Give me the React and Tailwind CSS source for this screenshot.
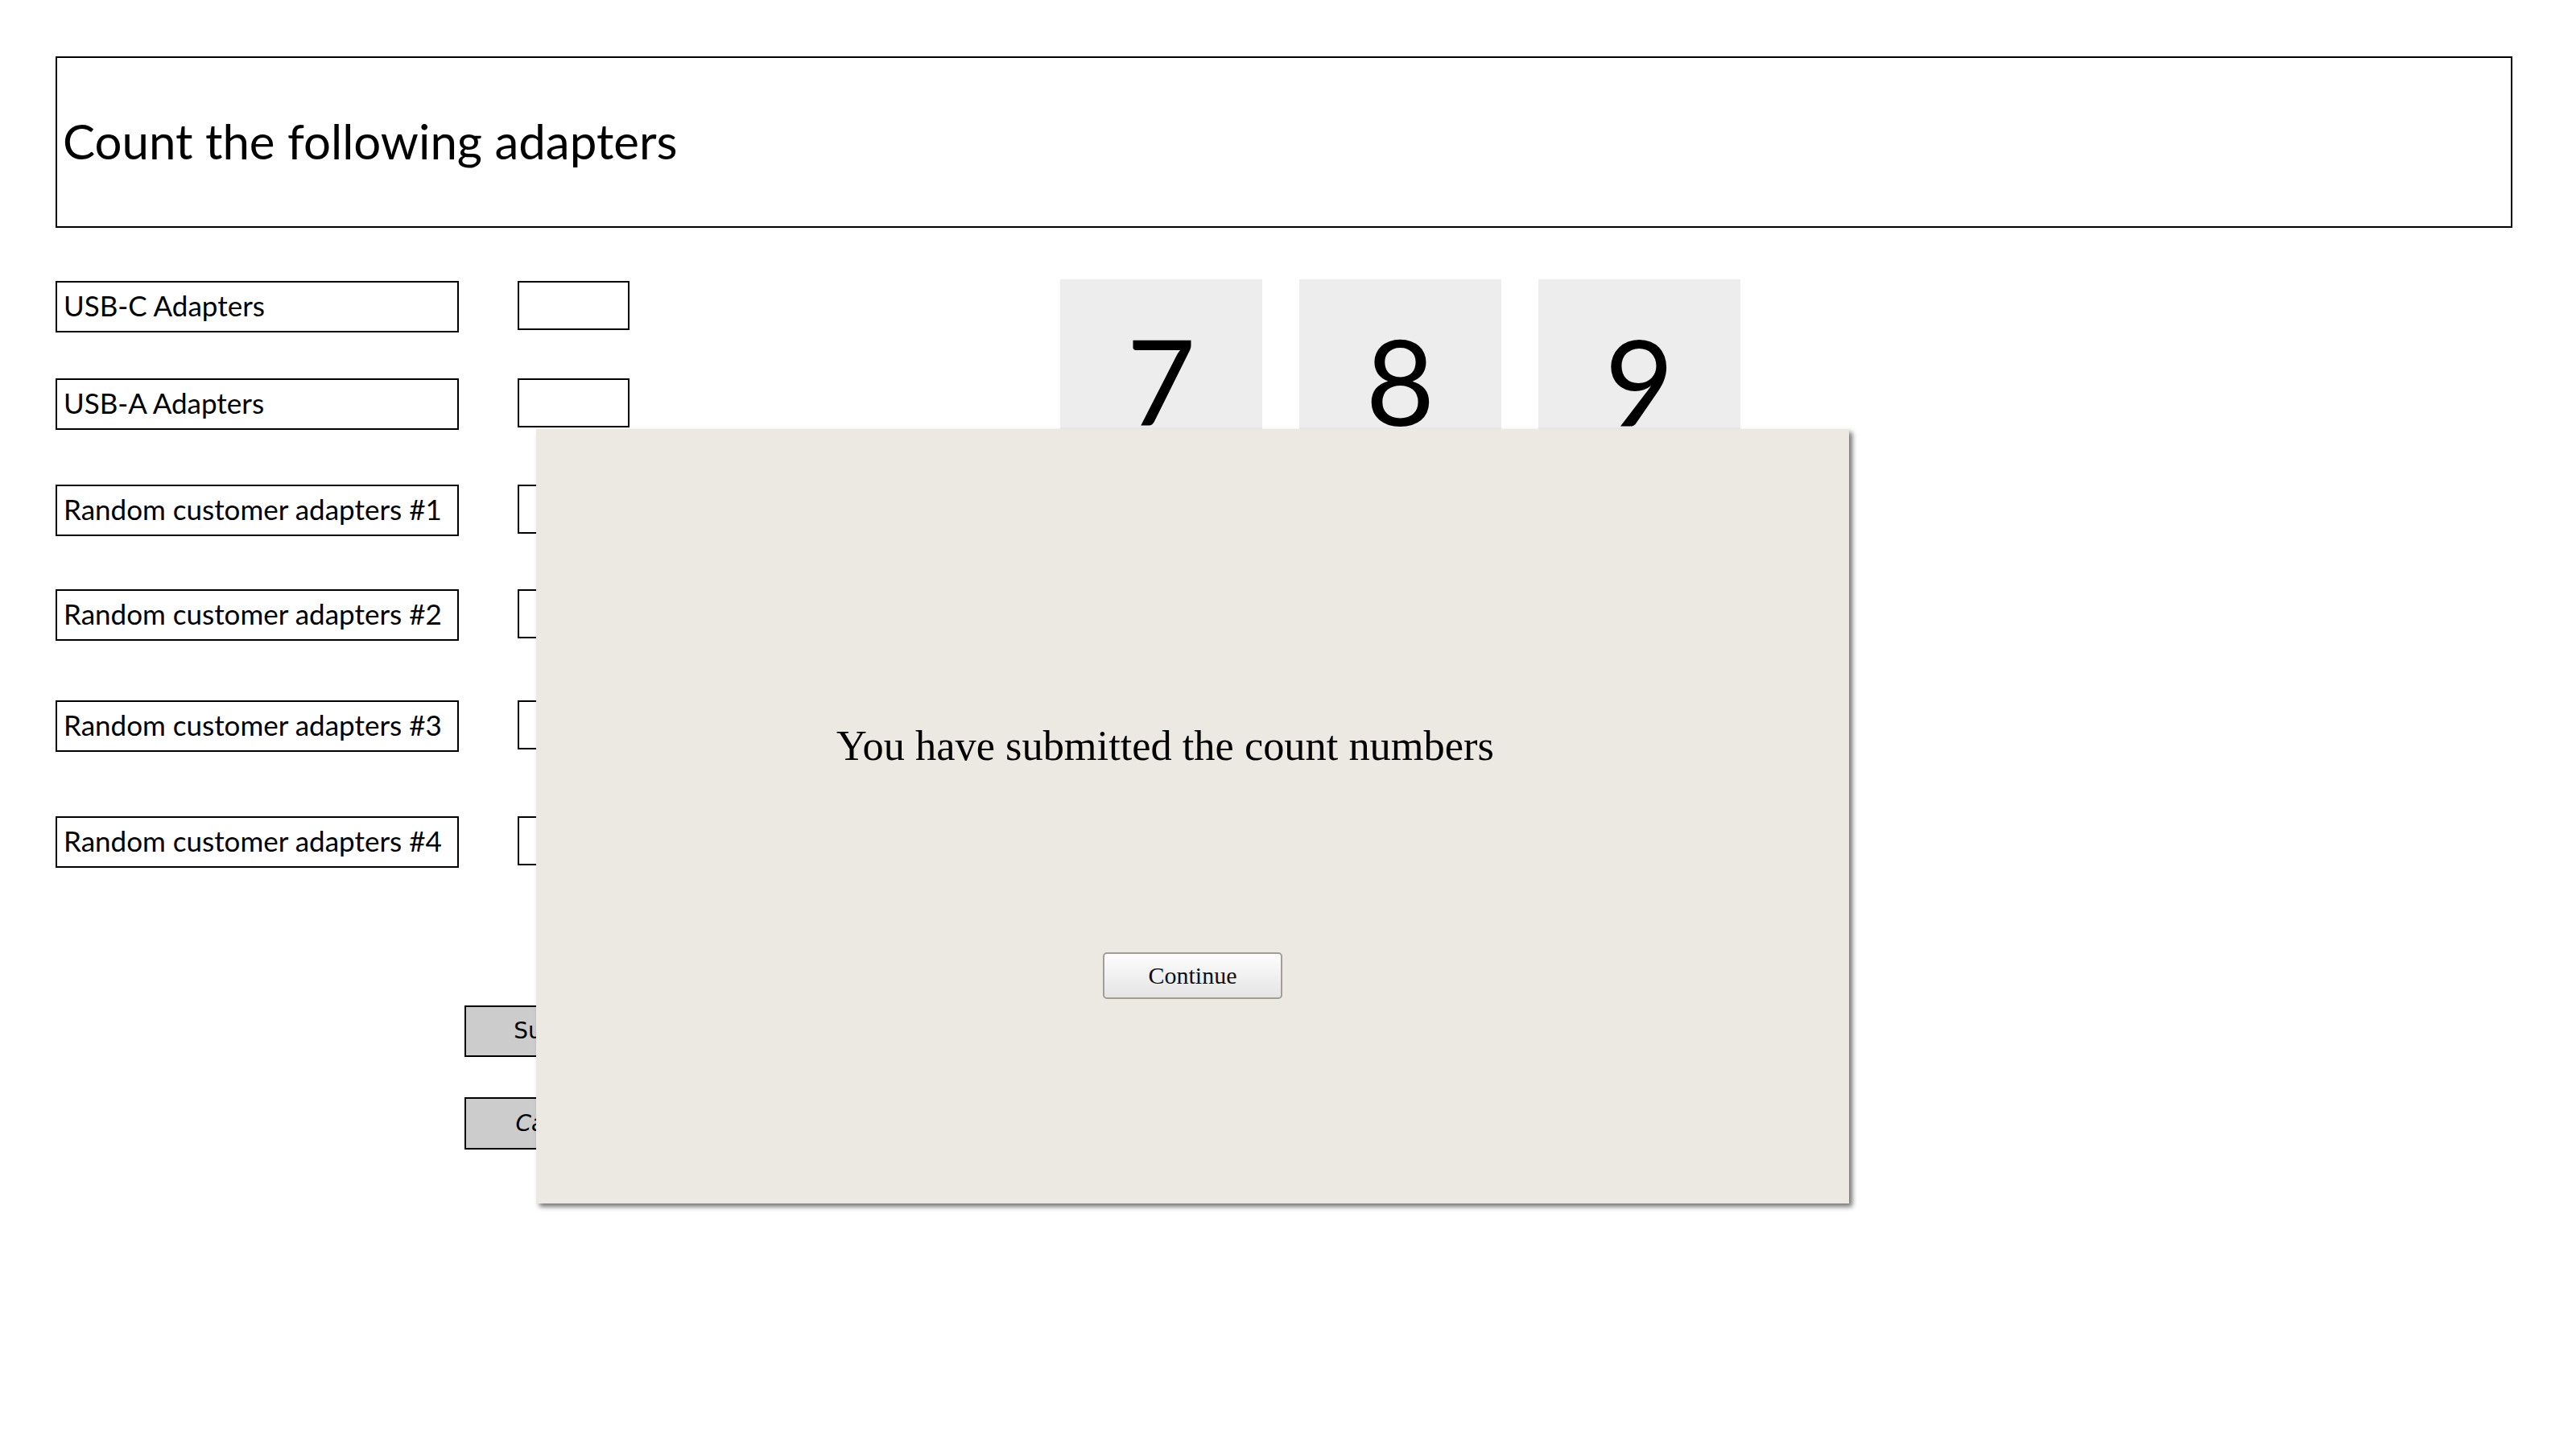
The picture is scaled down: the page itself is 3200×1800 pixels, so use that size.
import React from 'react';

const rows = [
  { label: 'USB-C Adapters', mt: 'mt-0' },
  { label: 'USB-A Adapters', mt: 'mt-[57px]' },
  { label: 'Random customer adapters #1', mt: 'mt-[68px]' },
  { label: 'Random customer adapters #2', mt: 'mt-[66px]' },
  { label: 'Random customer adapters #3', mt: 'mt-[74px]' },
  { label: 'Random customer adapters #4', mt: 'mt-[80px]' },
];

const digits = ['7', '8', '9'];

const CountRow = ({ label, mt }) => (
  <div className={`flex items-start ${mt}`}>
    <div className="w-[501px] h-[64px] border-2 border-black bg-white flex items-center pl-[8px] pb-[4px] text-[35px] text-black">
      {label}
    </div>
    <div className="ml-[73px] w-[139px] h-[61px] border-2 border-black bg-white" />
  </div>
);

const SubmittedDialog = () => (
  <div className="absolute left-[666px] top-[533px] w-[1631px] h-[962px] bg-[#ece9e3] shadow-[4px_4px_6px_rgba(0,0,0,0.55)] flex flex-col">
    <p className="pt-[363px] pl-[373px] text-[52.4px] leading-[60px] text-black font-['Liberation_Serif',serif]">
      You have submitted the count numbers
    </p>
    <button className="self-center mt-[227px] w-[223px] h-[58px] rounded-[5px] border-2 border-[#a59d92] bg-gradient-to-b from-[#fdfdfd] to-[#e4e4e4] text-[30px] text-[#111] font-['Liberation_Serif',serif] leading-none">
      Continue
    </button>
  </div>
);

const App = () => {
  return (
    <div className="relative w-[3200px] h-[1800px] bg-white font-['Lato',sans-serif] overflow-hidden">
      <div className="pt-[70px] pl-[69px]">
        {/* heading */}
        <div className="w-[3052px] h-[213px] border-2 border-black flex items-center pl-[7px] pb-[3px]">
          <h1 className="text-[60px] text-black">Count the following adapters</h1>
        </div>

        <div className="flex mt-[64px]">
          {/* form column */}
          <div className="flex flex-col pt-[2px]">
            {rows.map((r) => (
              <CountRow key={r.label} label={r.label} mt={r.mt} />
            ))}

            <button className="ml-[508px] mt-[171px] w-[222px] h-[64px] border-2 border-black bg-[#cccccc] text-[28px] text-black font-['DejaVu_Sans',sans-serif]">
              Submit
            </button>
            <button className="ml-[508px] mt-[50px] w-[222px] h-[65px] border-2 border-black bg-[#cccccc] text-[28px] italic text-black font-['DejaVu_Sans',sans-serif]">
              Cancel
            </button>
          </div>

          {/* digit tiles */}
          <div className="flex gap-[46px] ml-[518px]">
            {digits.map((d) => (
              <div
                key={d}
                className="w-[251px] h-[250px] bg-[#ededee] flex items-center justify-center text-[148px] text-black"
              >
                {d}
              </div>
            ))}
          </div>
        </div>
      </div>

      <SubmittedDialog />
    </div>
  );
};

export default App;
